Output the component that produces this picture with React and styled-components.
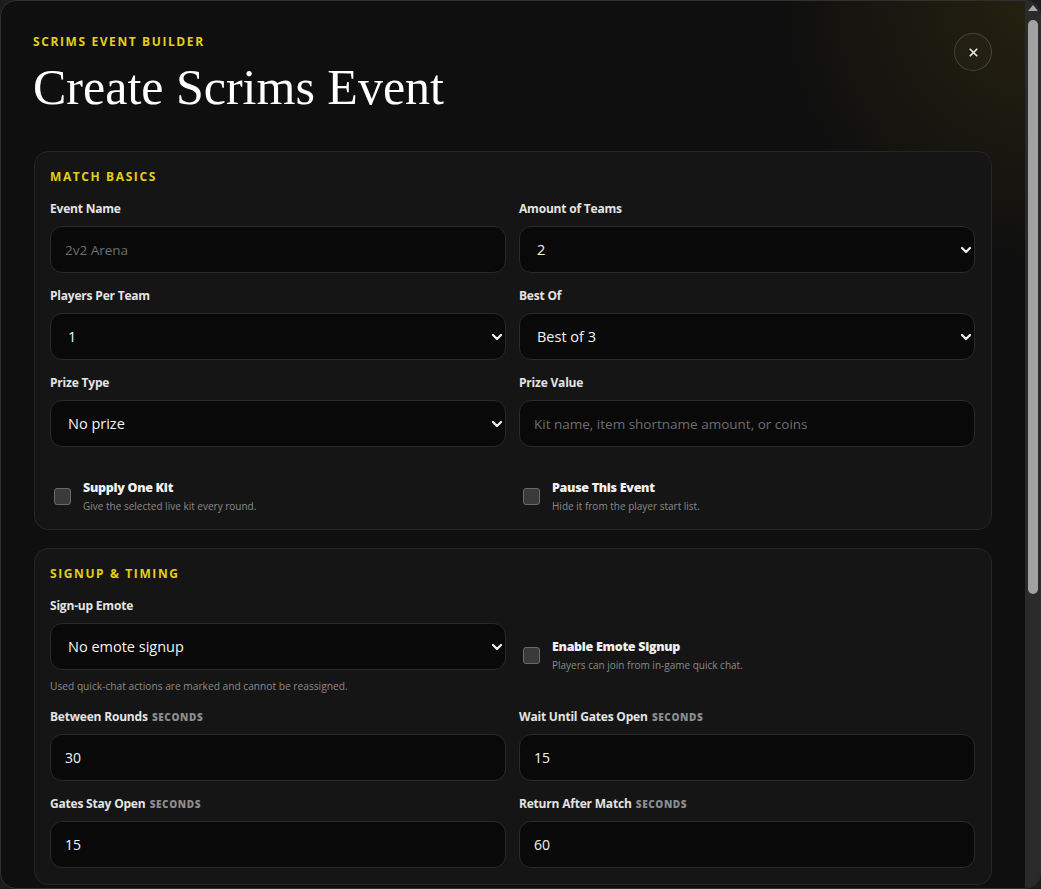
import React from "react";
import styled, { createGlobalStyle } from "styled-components";
import { X, ChevronDown } from "lucide-react";

const GlobalStyle = createGlobalStyle`
  html, body {
    margin: 0;
    padding: 0;
    background: #1c1c1c;
    font-family: "Open Sans", "Noto Sans", sans-serif;
  }
  * {
    box-sizing: border-box;
  }
`;

/////////////////// STYLED COMPONENTS
const Frame = styled.div`
  height: 100vh;
  display: flex;
  overflow: hidden;
  color-scheme: dark;
  border: 1px solid #303030;
  border-radius: 16px;
  color: #f2f2f2;
  background:
    radial-gradient(circle at 100% 0%, rgba(190, 160, 20, 0.13), rgba(190, 160, 20, 0) 260px),
    #0f0f0f;
`;

const ScrollArea = styled.div`
  flex: 1;
  min-width: 0;
  overflow-y: auto;
  scrollbar-width: none;
  padding: 33px;

  &::-webkit-scrollbar {
    display: none;
  }
`;

const Track = styled.div`
  flex: none;
  width: 15px;
  background: #2a2a2a;
  display: flex;
  flex-direction: column;
  align-items: center;
  padding-top: 4px;
`;

const TrackArrow = styled.div`
  width: 0;
  height: 0;
  border-left: 5px solid transparent;
  border-right: 5px solid transparent;
  border-bottom: 6px solid #a8a8a8;
  margin-bottom: 9px;
`;

const Thumb = styled.div`
  width: 10px;
  height: ${(props) => props.$size}px;
  border-radius: 5px;
  background: #a1a1a1;
`;

const Header = styled.header`
  display: flex;
  justify-content: space-between;
  align-items: flex-start;
  margin-bottom: 36px;
`;

const Eyebrow = styled.div`
  font-size: 12px;
  line-height: 16px;
  font-weight: 700;
  letter-spacing: 1.6px;
  text-transform: uppercase;
  color: #e3cf14;
  margin-bottom: 10px;
  margin-left: -1px;
`;

const Title = styled.h1`
  margin: 0 0 0 -1px;
  font-family: "Liberation Serif", "DejaVu Serif", serif;
  font-weight: 400;
  font-size: 50px;
  line-height: 55px;
  color: #ffffff;
`;

const CloseButton = styled.button`
  width: 38px;
  height: 38px;
  margin-top: -1px;
  border-radius: 50%;
  border: 1px solid rgba(255, 255, 255, 0.16);
  background: rgba(255, 255, 255, 0.02);
  color: #e6e6e6;
  display: flex;
  align-items: center;
  justify-content: center;
  padding: 0;
  cursor: pointer;
`;

const Sections = styled.div`
  display: flex;
  flex-direction: column;
  gap: 18px;
`;

const Card = styled.section`
  background: #151515;
  border: 1px solid #262626;
  border-radius: 14px;
  padding: 17px 16px 16px 15px;
`;

const CardTitle = styled.h2`
  margin: 0 0 16px;
  font-size: 12px;
  line-height: 16px;
  font-weight: 700;
  letter-spacing: 1.6px;
  text-transform: uppercase;
  color: #e3cf14;
`;

const FieldGrid = styled.div`
  display: grid;
  grid-template-columns: 1fr 1fr;
  column-gap: 13px;
  row-gap: 15px;
`;

const Field = styled.div`
  display: flex;
  flex-direction: column;
  gap: 9px;
  min-width: 0;
`;

const Label = styled.label`
  font-size: 12px;
  line-height: 16px;
  font-weight: 700;
  color: #e4e4e4;
  letter-spacing: -0.2px;
`;

const Unit = styled.span`
  font-size: 10px;
  font-weight: 800;
  letter-spacing: 0.6px;
  text-transform: uppercase;
  color: #8c8c8c;
  margin-left: 1px;
`;

const Input = styled.input`
  height: 47px;
  width: 100%;
  padding: 0 14px;
  border-radius: 12px;
  border: 1px solid #2a2a2a;
  background: #090909;
  color: #f4f4f4;
  font-family: inherit;
  font-size: 14px;
  outline: none;

  &::placeholder {
    color: #6e6e6e;
    font-size: 13.5px;
  }
`;

const SelectWrap = styled.div`
  position: relative;
`;

const Select = styled.select`
  appearance: none;
  height: 47px;
  width: 100%;
  padding: 0 36px 0 17px;
  border-radius: 12px;
  border: 1px solid #2a2a2a;
  background: #090909;
  color: #f4f4f4;
  font-family: inherit;
  font-size: 14.5px;
  outline: none;
`;

const Chevron = styled(ChevronDown)`
  position: absolute;
  right: 1px;
  top: 50%;
  transform: translateY(-50%);
  color: #eeeeee;
  pointer-events: none;
`;

const Hint = styled.p`
  margin: 0;
  font-size: 10.2px;
  line-height: 15px;
  color: #8a8a8a;
`;

const ToggleGrid = styled.div`
  display: grid;
  grid-template-columns: 1fr 1fr;
  column-gap: 13px;
  margin-top: 32px;
`;

const Toggle = styled.label`
  display: flex;
  align-items: center;
  gap: 12px;
  padding: 0 4px;
  margin-top: ${(props) => props.$offset || 0}px;
  cursor: pointer;
  align-self: start;
`;

const Check = styled.input`
  appearance: none;
  flex: none;
  width: 17px;
  height: 17px;
  margin: 0;
  border-radius: 3px;
  border: 1px solid #6a6a6a;
  background: #3a3a3a;
`;

const ToggleText = styled.div`
  display: flex;
  flex-direction: column;
  gap: 4px;
`;

const ToggleTitle = styled.span`
  font-size: 12.5px;
  line-height: 17px;
  font-weight: 800;
  color: #f0f0f0;
  letter-spacing: -0.3px;
`;

const ToggleDesc = styled.span`
  font-size: 10px;
  line-height: 13px;
  color: #8a8a8a;
`;

const Footer = styled.div`
  display: flex;
  justify-content: flex-end;
  gap: 12px;
  margin-top: 22px;
`;

const Button = styled.button`
  height: 44px;
  padding: 0 22px;
  border-radius: 12px;
  font-family: inherit;
  font-size: 13px;
  font-weight: 700;
  cursor: pointer;
  border: 1px solid ${(props) => (props.$primary ? "#e3cf14" : "#2e2e2e")};
  background: ${(props) => (props.$primary ? "#e3cf14" : "#151515")};
  color: ${(props) => (props.$primary ? "#111111" : "#e4e4e4")};
`;
/////////////////// STYLED COMPONENTS

function SelectField({ label, value, options, hint }) {
  return (
    <Field>
      <Label>{label}</Label>
      <SelectWrap>
        <Select defaultValue={value}>
          {options.map((o) => (
            <option key={o}>{o}</option>
          ))}
        </Select>
        <Chevron size={16} strokeWidth={3.4} />
      </SelectWrap>
      {hint ? <Hint>{hint}</Hint> : null}
    </Field>
  );
}

function InputField({ label, unit, value, placeholder }) {
  return (
    <Field>
      <Label>
        {label}
        {unit ? <Unit> {unit}</Unit> : null}
      </Label>
      <Input defaultValue={value} placeholder={placeholder} />
    </Field>
  );
}

function ToggleItem({ title, desc, offset }) {
  return (
    <Toggle $offset={offset}>
      <Check type="checkbox" />
      <ToggleText>
        <ToggleTitle>{title}</ToggleTitle>
        <ToggleDesc>{desc}</ToggleDesc>
      </ToggleText>
    </Toggle>
  );
}

export default function App() {
  return (
    <>
      <GlobalStyle />
      <Frame>
        <ScrollArea>
          <Header>
            <div>
              <Eyebrow>Scrims Event Builder</Eyebrow>
              <Title>Create Scrims Event</Title>
            </div>
            <CloseButton aria-label="Close">
              <X size={13} strokeWidth={3.2} />
            </CloseButton>
          </Header>

          <Sections>
            <Card>
              <CardTitle>Match Basics</CardTitle>
              <FieldGrid>
                <InputField label="Event Name" placeholder="2v2 Arena" />
                <SelectField label="Amount of Teams" value="2" options={["2", "3", "4", "6", "8"]} />
                <SelectField label="Players Per Team" value="1" options={["1", "2", "3", "4", "5"]} />
                <SelectField
                  label="Best Of"
                  value="Best of 3"
                  options={["Best of 1", "Best of 3", "Best of 5", "Best of 7"]}
                />
                <SelectField
                  label="Prize Type"
                  value="No prize"
                  options={["No prize", "Kit", "Item", "Coins"]}
                />
                <InputField label="Prize Value" placeholder="Kit name, item shortname amount, or coins" />
              </FieldGrid>
              <ToggleGrid>
                <ToggleItem title="Supply One Kit" desc="Give the selected live kit every round." />
                <ToggleItem title="Pause This Event" desc="Hide it from the player start list." />
              </ToggleGrid>
            </Card>

            <Card>
              <CardTitle>Signup &amp; Timing</CardTitle>
              <FieldGrid>
                <SelectField
                  label="Sign-up Emote"
                  value="No emote signup"
                  options={["No emote signup", "Wave", "Thumbs up", "Point"]}
                  hint="Used quick-chat actions are marked and cannot be reassigned."
                />
                <ToggleItem
                  title="Enable Emote Signup"
                  desc="Players can join from in-game quick chat."
                  offset={40}
                />
                <InputField label="Between Rounds" unit="Seconds" value="30" />
                <InputField label="Wait Until Gates Open" unit="Seconds" value="15" />
                <InputField label="Gates Stay Open" unit="Seconds" value="15" />
                <InputField label="Return After Match" unit="Seconds" value="60" />
              </FieldGrid>
            </Card>

            <Card>
              <CardTitle>Arena &amp; Rules</CardTitle>
              <FieldGrid>
                <SelectField label="Arena" value="Default arena" options={["Default arena", "Warehouse", "Rooftop"]} />
                <SelectField label="Kit" value="No kit" options={["No kit", "Starter", "Raid"]} />
                <InputField label="Round Time Limit" unit="Seconds" value="180" />
                <InputField label="Minimum Players" value="2" />
                <InputField label="Announcement" placeholder="Shown to players when sign-up opens" />
                <InputField label="Reward Command" placeholder="Optional console command" />
              </FieldGrid>
            </Card>
          </Sections>

          <Footer>
            <Button>Cancel</Button>
            <Button $primary>Create Event</Button>
          </Footer>
        </ScrollArea>
        <Track aria-hidden="true">
          <TrackArrow />
          <Thumb $size={574} />
        </Track>
      </Frame>
    </>
  );
}
